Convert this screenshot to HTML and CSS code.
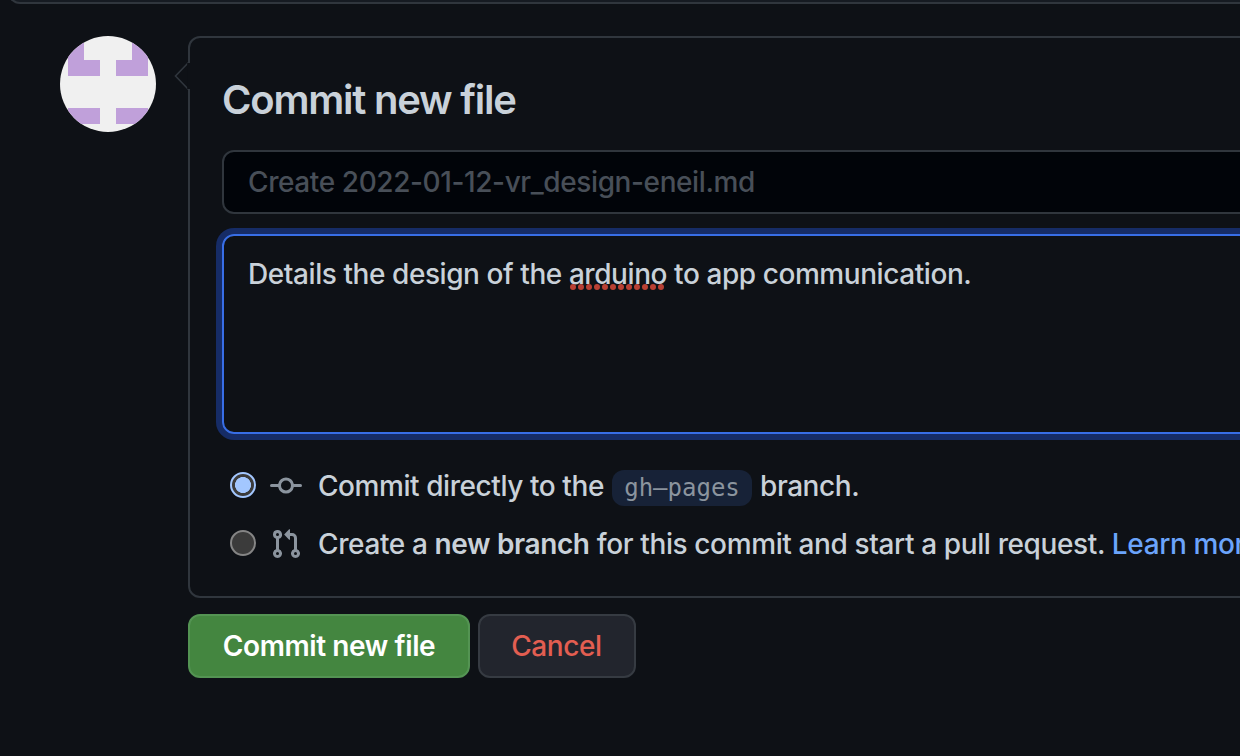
FILE: index.html
```html
<!DOCTYPE html>
<html lang="en">
<head>
<meta charset="utf-8">
<title>Commit new file</title>
<link rel="stylesheet" href="styles.css">
</head>
<body>
<div class="editor-edge"></div>
<main class="commit">
  <svg class="avatar" viewBox="0 0 96 96" aria-hidden="true">
    <defs><clipPath id="round"><circle cx="48" cy="48" r="48"/></clipPath></defs>
    <g clip-path="url(#round)">
      <rect width="96" height="96" fill="#f0f0f0"/>
      <path fill="#c0a0da" d="M8 0h16v24h16v16H8zM72 0h16v40H56V24h16zM8 72h32v16H8zM56 72h32v16H56z"/>
    </g>
  </svg>
  <form class="form">
    <section class="panel">
      <svg class="caret" viewBox="0 0 16 30" aria-hidden="true"><path d="M15 1L1.5 15 15 29" fill="#0e1116" stroke="#30363d" stroke-width="1.6"/><path d="M14.6 2v26" stroke="#0e1116" stroke-width="2.8"/></svg>
      <h1 class="title">Commit new file</h1>
      <div class="field summary"><span class="summary-text">Create 2022-01-12-vr_design-eneil.md</span></div>
      <div class="field description"><span class="description-text">Details the design of the <span class="misspelled">arduino<svg class="dots" viewBox="0 0 96 6" aria-hidden="true"><path d="M3 3H92" stroke="#b94034" stroke-width="6" stroke-linecap="round" stroke-dasharray="0 8"/></svg></span> to app communication.</span></div>
      <div class="choice">
        <span class="radio radio-on"></span>
        <svg class="icon" viewBox="0 0 16 16" aria-hidden="true"><path fill-rule="evenodd" d="M10.5 7.75a2.5 2.5 0 11-5 0 2.5 2.5 0 015 0zm1.43.75a4.002 4.002 0 01-7.86 0H.75a.75.75 0 110-1.5h3.32a4.001 4.001 0 017.86 0h3.32a.75.75 0 110 1.5h-3.32z"/></svg>
        <span class="direct">Commit directly to the</span>
        <code class="branch">gh–pages</code>
        <span>branch.</span>
      </div>
      <div class="choice choice-pr">
        <span class="radio"></span>
        <svg class="icon" viewBox="0 0 16 16" aria-hidden="true"><path fill-rule="evenodd" d="M7.177 3.073L9.573.677A.25.25 0 0110 .854v4.792a.25.25 0 01-.427.177L7.177 3.427a.25.25 0 010-.354zM3.75 2.5a.75.75 0 100 1.5.75.75 0 000-1.5zm-2.25.75a2.25 2.25 0 113 2.122v5.256a2.251 2.251 0 11-1.5 0V5.372A2.25 2.25 0 011.5 3.25zM11 2.5h-1V4h1a1 1 0 011 1v5.628a2.251 2.251 0 101.5 0V5A2.5 2.5 0 0011 2.5zm1 10.25a.75.75 0 111.5 0 .75.75 0 01-1.5 0zM3.75 12a.75.75 0 100 1.5.75.75 0 000-1.5z"/></svg>
        <span class="pull">Create a <b>new branch</b> for this commit and start a pull request. <a class="link">Learn more</a></span>
      </div>
    </section>
    <div class="actions">
      <button class="btn btn-primary" type="button">Commit new file</button>
      <button class="btn btn-cancel" type="button">Cancel</button>
    </div>
  </form>
</main>
</body>
</html>
```
FILE: styles.css
```css
* { box-sizing: border-box; }
body {
  display: flow-root;
  margin: 0;
  width: 1240px;
  height: 756px;
  overflow: hidden;
  background: #0e1116;
  color: #c9d1d9;
  font-family: Inter, "Liberation Sans", sans-serif;
  font-size: 28px;
  font-weight: 450;
  letter-spacing: -0.43px;
  line-height: 42px;
  white-space: nowrap;
}
.editor-edge {
  height: 20px;
  margin: -16px 0 0 8px;
  border-bottom: 2px solid #30363d;
  border-left: 2px solid #30363d;
  border-bottom-left-radius: 12px;
  background: #161b22;
}
.commit { display: flex; gap: 32px; padding: 32px 0 0 60px; }
.avatar { width: 96px; height: 96px; flex: none; }
.form { width: 1200px; flex: none; }
.panel {
  position: relative;
  height: 562px;
  padding: 32px;
  border: 2px solid #30363d;
  border-radius: 12px;
}
.caret { position: absolute; left: -16px; top: 23px; width: 16px; height: 30px; }
.title {
  margin: 0 0 20px;
  height: 60px;
  font-size: 40px;
  line-height: 60px;
  font-weight: 620;
  letter-spacing: -1.22px;
}
.field { border: 2px solid #30363d; border-radius: 12px; padding: 10px 24px; }
.summary { height: 64px; background: #010409; color: #484f58; line-height: 40px; letter-spacing: -0.4px; }
.description {
  height: 200px;
  margin-top: 20px;
  padding-top: 17px;
  border-color: #386ee6;
  box-shadow: 0 0 0 6px #162c66;
}
.misspelled { position: relative; }
.dots { position: absolute; left: 1px; bottom: 1px; width: 96px; height: 6px; }
.choice { display: flex; align-items: center; height: 42px; margin: 31px 0 0 8px; }
.choice-pr { margin-top: 16px; }
.choice > * { flex: none; }
.radio {
  width: 26px;
  height: 26px;
  margin: 0 14px 2px 0;
  border: 2px solid #858585;
  border-radius: 50%;
  background: #3b3b3b;
}
.radio-on {
  border-color: #a3c7ff;
  background: radial-gradient(circle, #a3c7ff 7.7px, #3b3b3b 8.3px);
}
.icon { width: 32px; height: 32px; margin-right: 16px; fill: #8b949e; }
.direct { width: 286px; }
.pull { letter-spacing: -0.38px; }
.branch {
  width: 140px;
  height: 36px;
  margin: 4px 8px 0;
  border-radius: 12px;
  background: #172237;
  color: #8b949e;
  font: 24px/36px "DejaVu Sans Mono", monospace;
  letter-spacing: 0;
  text-align: center;
}
b { font-weight: 640; }
.link { color: #6ba4fb; }
.actions { display: flex; gap: 8px; margin-top: 16px; }
.btn {
  height: 64px;
  padding: 0;
  border: 2px solid #549453;
  border-radius: 12px;
  font: 600 28px/40px Inter, sans-serif;
  letter-spacing: -0.4px;
}
.btn-primary { width: 282px; background: #448640; color: #fff; }
.btn-cancel { width: 158px; padding-right: 1px; background: #22252d; border-color: #363b42; color: #e35e51; font-weight: 520; }
```
